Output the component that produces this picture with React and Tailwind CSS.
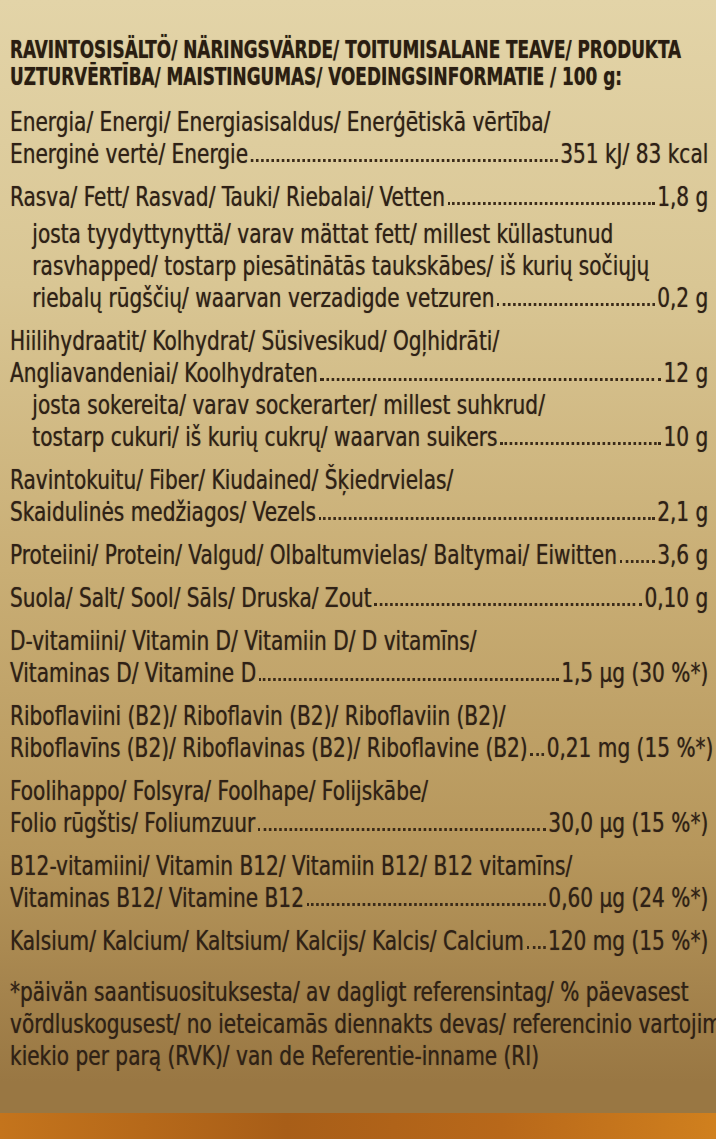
// Nutrition facts panel from a multilingual (FI/SV/ET/LV/LT/NL) package.
// The printed face is a condensed sans; the installed condensed faces are wider,
// so the text columns are squeezed horizontally with scale-x.
const FONT = { fontFamily: '"DejaVu Sans Condensed", "Liberation Sans Narrow", "Liberation Sans", sans-serif' };

const groups = [
  { lines: ["Energia/ Energi/ Energiasisaldus/ Enerģētiskā vērtība/", "Energinė vertė/ Energie"], value: "351 kJ/ 83 kcal" },
  { lines: ["Rasva/ Fett/ Rasvad/ Tauki/ Riebalai/ Vetten"], value: "1,8 g",
    sub: {
      lines: [
        "josta tyydyttynyttä/ varav mättat fett/ millest küllastunud",
        "rasvhapped/ tostarp piesātinātās taukskābes/ iš kurių sočiųjų",
        "riebalų rūgščių/ waarvan verzadigde vetzuren",
      ],
      value: "0,2 g",
      gap: true,
    },
  },
  { lines: ["Hiilihydraatit/ Kolhydrat/ Süsivesikud/ Ogļhidrāti/", "Angliavandeniai/ Koolhydraten"], value: "12 g",
    sub: {
      lines: ["josta sokereita/ varav sockerarter/ millest suhkrud/", "tostarp cukuri/ iš kurių cukrų/ waarvan suikers"],
      value: "10 g",
    },
  },
  { lines: ["Ravintokuitu/ Fiber/ Kiudained/ Šķiedrvielas/", "Skaidulinės medžiagos/ Vezels"], value: "2,1 g" },
  { lines: ["Proteiini/ Protein/ Valgud/ Olbaltumvielas/ Baltymai/ Eiwitten"], value: "3,6 g" },
  { lines: ["Suola/ Salt/ Sool/ Sāls/ Druska/ Zout"], value: "0,10 g" },
  { lines: ["D-vitamiini/ Vitamin D/ Vitamiin D/ D vitamīns/", "Vitaminas D/ Vitamine D"], value: "1,5 µg (30 %*)" },
  { lines: ["Riboflaviini (B2)/ Riboflavin (B2)/ Riboflaviin (B2)/", "Riboflavīns (B2)/ Riboflavinas (B2)/ Riboflavine (B2)"], value: "0,21 mg (15 %*)" },
  { lines: ["Foolihappo/ Folsyra/ Foolhape/ Folijskābe/", "Folio rūgštis/ Foliumzuur"], value: "30,0 µg (15 %*)" },
  { lines: ["B12-vitamiini/ Vitamin B12/ Vitamiin B12/ B12 vitamīns/", "Vitaminas B12/ Vitamine B12"], value: "0,60 µg (24 %*)" },
  { lines: ["Kalsium/ Kalcium/ Kaltsium/ Kalcijs/ Kalcis/ Calcium"], value: "120 mg (15 %*)" },
];

function Entry({ lines, value, indent, gap }) {
  const head = lines.slice(0, -1);
  const last = lines[lines.length - 1];
  return (
    <div className={(indent ? "pl-[26px] " : "") + (gap ? "mt-[5px]" : "")}>
      {head.map((l) => (
        <p key={l} className="whitespace-nowrap">{l}</p>
      ))}
      <div className="flex items-end">
        <span className="whitespace-nowrap">{last}</span>
        <span className="mx-[3px] mb-[8px] h-[3px] min-w-[16px] flex-1 border-b-[3px] border-dotted border-[#3a2a18]" />
        <span className="whitespace-nowrap">{value}</span>
      </div>
    </div>
  );
}

export default function App() {
  return (
    <div
      style={FONT}
      className="flex min-h-[1139px] flex-col overflow-hidden bg-[linear-gradient(180deg,#e3d4a8_0%,#d9c694_25%,#c9ae75_50%,#b6965b_75%,#997743_95%)] text-[#2f2116] [text-shadow:0_0_1px_rgba(40,28,16,0.6)]"
    >
      <div className="flex-1 pl-[10px] pt-[36px]">
        <h1 className="w-[920px] origin-left scale-x-[0.75] whitespace-nowrap text-[25px] font-bold leading-[27px] text-[#2a1d11]">
          <span className="block">RAVINTOSISÄLTÖ/ NÄRINGSVÄRDE/ TOITUMISALANE TEAVE/ PRODUKTA</span>
          <span className="block">UZTURVĒRTĪBA/ MAISTINGUMAS/ VOEDINGSINFORMATIE / 100 g:</span>
        </h1>

        <div className="mt-[16px] flex w-[812px] origin-left scale-x-[0.86] flex-col gap-[11px] text-[26px] leading-[32px]">
          {groups.map((g) => (
            <div key={g.lines[0]}>
              <Entry lines={g.lines} value={g.value} />
              {g.sub && <Entry lines={g.sub.lines} value={g.sub.value} indent gap={g.sub.gap} />}
            </div>
          ))}

          <div className="mt-[8px] whitespace-nowrap">
            <p>*päivän saantisuosituksesta/ av dagligt referensintag/ % päevasest</p>
            <p>võrdluskogusest/ no ieteicamās diennakts devas/ referencinio vartojimo</p>
            <p>kiekio per parą (RVK)/ van de Referentie-inname (RI)</p>
          </div>
        </div>
      </div>

      <div className="h-[26px] bg-[linear-gradient(90deg,#c4741c,#a85e18_40%,#b8681a_70%,#d0801e)]" />
    </div>
  );
}
